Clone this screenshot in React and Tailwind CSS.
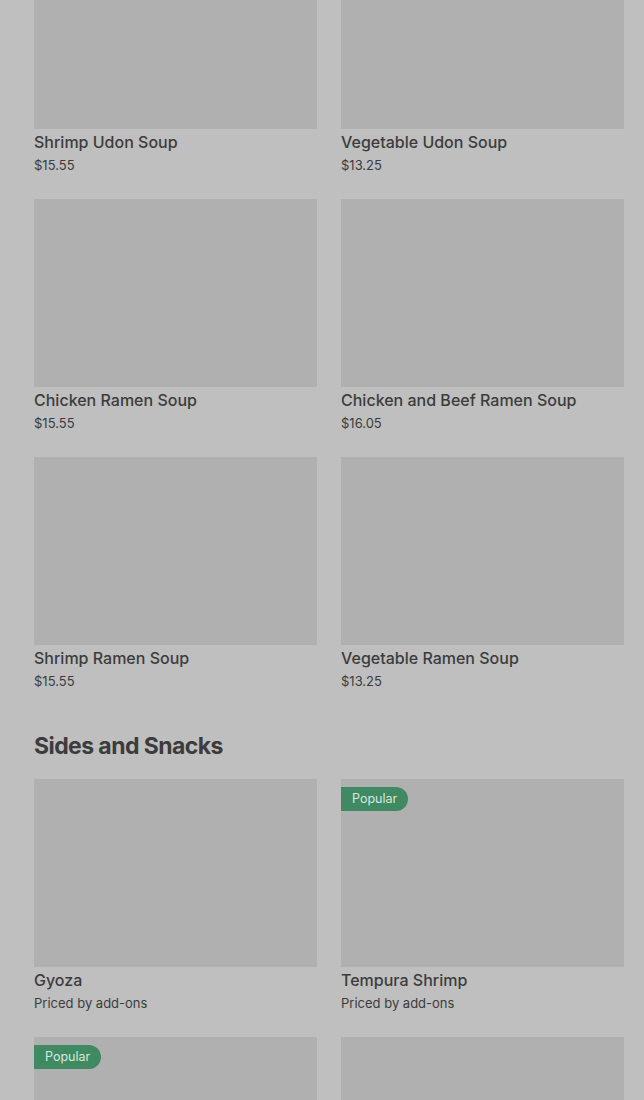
const soups = [
    { name: 'Shrimp Udon Soup', price: '$15.55' },
    { name: 'Vegetable Udon Soup', price: '$13.25' },
    { name: 'Chicken Ramen Soup', price: '$15.55' },
    { name: 'Chicken and Beef Ramen Soup', price: '$16.05' },
    { name: 'Shrimp Ramen Soup', price: '$15.55' },
    { name: 'Vegetable Ramen Soup', price: '$13.25' },
];

// last row is only partly on screen, so its captions are left out
const sides = [
    { name: 'Gyoza', price: 'Priced by add-ons' },
    { name: 'Tempura Shrimp', price: 'Priced by add-ons', popular: true },
    { popular: true },
    {},
];

const ItemCard = ({ item }) => (
    <div className="flex flex-col">
        <div className="relative h-[188px] bg-[#b0b0b0]">
            {item.popular && (
                <span className="absolute left-0 top-2 h-6 px-[11px] flex items-center rounded-r-full bg-[#3f8a63] text-[12.5px] text-[#d8e8de]">
                    Popular
                </span>
            )}
        </div>
        {item.name && (
            <>
                <div className="mt-[1px] text-[16px] leading-6 font-medium text-[#3c3c3c]">{item.name}</div>
                <div className="mt-[1px] text-[13px] leading-5 text-[#3c3c3c]">{item.price}</div>
            </>
        )}
    </div>
);

const App = () => {
    return (
        <div className="h-[1100px] overflow-hidden bg-[#bfbfbf]" style={{ fontFamily: 'Inter, "Noto Sans", sans-serif' }}>
            <div className="-mt-[59px] pl-[34px] pr-[20px]">
                <div className="grid grid-cols-2 gap-x-6 gap-y-[24px]">
                    {soups.map((item, i) => <ItemCard key={i} item={item} />)}
                </div>

                <h2 className="mt-[39px] mb-[17px] text-[23px] leading-8 font-bold tracking-tight text-[#3c3c3c]">
                    Sides and Snacks
                </h2>

                <div className="grid grid-cols-2 gap-x-6 gap-y-[24px]">
                    {sides.map((item, i) => <ItemCard key={i} item={item} />)}
                </div>
            </div>
        </div>
    );
};

export default App;
